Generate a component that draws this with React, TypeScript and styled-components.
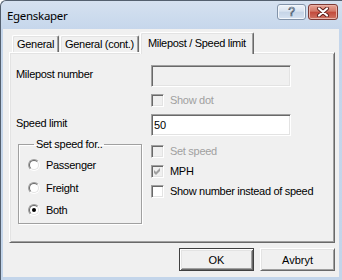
import styled, { createGlobalStyle } from "styled-components";

const GlobalStyle = createGlobalStyle`
  html, body {
    margin: 0;
    padding: 0;
    background: #fff;
  }
  #root {
    width: 342px;
    height: 280px;
  }
`;

// classic win colours
const face = "#f0f0f0";
const light = "#e3e3e3";
const shadow = "#a0a0a0";
const dark = "#696969";

const Window = styled.div`
  width: 342px;
  height: 280px;
  box-sizing: border-box;
  display: flex;
  flex-direction: column;
  background: linear-gradient(#d5e1f0, #c5d6eb 30px, #c3d5ea);
  border-left: 1px solid #54606f;
  border-top: 1px solid #54606f;
  border-top-left-radius: 6px;
  padding: 0 3px 3px 2px;
  font-family: "Liberation Sans", Arial, sans-serif;
  font-size: 11px;
  letter-spacing: -0.3px;
  color: #000;
`;

const TitleBar = styled.div`
  height: 28px;
  box-sizing: border-box;
  display: flex;
  justify-content: space-between;
  align-items: flex-start;
  padding: 3px 1px 0 4px;
`;

const Title = styled.span`
  font-family: "Noto Sans", "Open Sans", sans-serif;
  font-size: 11.5px;
  letter-spacing: -0.3px;
  line-height: 16px;
  margin-top: 4px;
  color: #000;
`;

const Caption = styled.div`
  display: flex;
  gap: 2px;
`;

const CaptionButton = styled.div<{ $close?: boolean }>`
  width: ${(p) => (p.$close ? 30 : 29)}px;
  height: 16px;
  box-sizing: border-box;
  display: flex;
  align-items: center;
  justify-content: center;
  border-radius: 3px;
  border: 1px solid ${(p) => (p.$close ? "#7d3a35" : "#8293a9")};
  background: ${(p) =>
    p.$close
      ? "linear-gradient(#e8a597, #d27868 45%, #c2493b 50%, #cf7464)"
      : "linear-gradient(#eef3f9, #d9e3f0 45%, #c5d4e7 50%, #d6e2f1)"};
  box-shadow: inset 0 0 0 1px ${(p) => (p.$close ? "#eab3a8" : "#f3f7fc")};
`;

const HelpMark = styled.span`
  font-family: "Liberation Sans", Arial, sans-serif;
  font-size: 12px;
  line-height: 12px;
  color: #f4f7fb;
  -webkit-text-stroke: 0.7px #4a5a70;
`;

const Client = styled.div`
  flex: 1;
  display: flex;
  flex-direction: column;
  background: ${face};
  padding: 3px 4px 6px 6px;
`;

const TabStrip = styled.div`
  display: flex;
  align-items: flex-end;
  padding-left: 3px;
  height: 20px;
  position: relative;
  z-index: 1;
`;

const Tab = styled.div<{ $active?: boolean }>`
  box-sizing: border-box;
  height: ${(p) => (p.$active ? 22 : 17)}px;
  padding: ${(p) => (p.$active ? "0 7px 2px" : "0 4px")};
  margin: ${(p) => (p.$active ? "0 -2px -2px 0" : "0 1px 0 0")};
  display: flex;
  align-items: center;
  white-space: nowrap;
  background: ${face};
  border: 1px solid;
  border-color: #fff ${dark} transparent #fff;
  border-bottom: none;
  border-radius: 2px 2px 0 0;
  box-shadow: inset -1px 0 ${shadow}, inset 1px 1px ${light};
`;

const Panel = styled.div`
  flex: 1;
  box-sizing: border-box;
  border: 1px solid;
  border-color: #fff ${dark} ${dark} #fff;
  box-shadow: inset 1px 1px ${light}, inset -1px -1px ${shadow};
  padding: 12px 0 0 6px;
  display: grid;
  grid-template-columns: 135px 140px;
  grid-template-rows: 22px 13px 22px auto;
  row-gap: 7px;
  align-content: start;
`;

const Label = styled.div`
  line-height: 13px;
  padding-top: 3px;
  white-space: nowrap;
`;

const TextBox = styled.input`
  box-sizing: border-box;
  width: 140px;
  height: 22px;
  margin: 0;
  padding: 0 2px;
  font: inherit;
  color: #000;
  outline: none;
  border: 1px solid;
  border-color: ${shadow} #fff #fff ${shadow};
  box-shadow: inset 1px 1px ${dark}, inset -1px -1px ${light};
  background: #fff;
  &:disabled {
    background: ${face};
  }
`;

const Check = styled.label<{ $disabled?: boolean }>`
  display: flex;
  align-items: center;
  gap: 6px;
  height: 13px;
  line-height: 13px;
  white-space: nowrap;
  color: ${(p) => (p.$disabled ? "#a0a0a0" : "#000")};
`;

const Box = styled.span<{ $disabled?: boolean }>`
  width: 13px;
  height: 13px;
  box-sizing: border-box;
  flex: none;
  display: flex;
  align-items: center;
  justify-content: center;
  border: 1px solid;
  border-color: ${shadow} #fff #fff ${shadow};
  box-shadow: inset 1px 1px ${dark}, inset -1px -1px ${light};
  background: ${(p) => (p.$disabled ? face : "#fff")};
`;

const CheckList = styled.div`
  display: flex;
  flex-direction: column;
  gap: 7px;
  padding-top: 2px;
`;

const Group = styled.fieldset`
  margin: -5px 0 0 2px;
  width: 124px;
  height: 86px;
  box-sizing: border-box;
  padding: 3px 0 0 9px;
  border: 1px solid ${shadow};
  box-shadow: 1px 1px 0 #fff, inset 1px 1px 0 #fff;
  display: flex;
  flex-direction: column;
`;

const Legend = styled.legend`
  padding: 0 2px;
  margin-left: 6px;
  line-height: 13px;
`;

const RadioRow = styled.label`
  display: flex;
  align-items: center;
  gap: 6px;
  height: 22.5px;
  white-space: nowrap;
`;

const Radio = styled.span<{ $checked?: boolean }>`
  width: 12px;
  height: 12px;
  box-sizing: border-box;
  flex: none;
  border-radius: 50%;
  border: 1px solid;
  border-color: ${shadow} #fff #fff ${shadow};
  position: relative;
  &::before {
    content: "";
    position: absolute;
    inset: 0;
    border-radius: 50%;
    border: 1px solid;
    border-color: ${dark} ${light} ${light} ${dark};
    background: #fff;
  }
  &::after {
    content: "";
    display: ${(p) => (p.$checked ? "block" : "none")};
    position: absolute;
    left: 3px;
    top: 3px;
    width: 4px;
    height: 4px;
    border-radius: 50%;
    background: #000;
  }
`;

const Footer = styled.div`
  display: flex;
  justify-content: flex-end;
  gap: 6px;
  margin-top: 5px;
`;

const Button = styled.button<{ $default?: boolean }>`
  width: 75px;
  height: 23px;
  margin: 0;
  padding: 0;
  font: inherit;
  color: #000;
  background: ${face};
  border: 1px solid;
  border-color: ${(p) =>
    p.$default ? "#404040" : `#fff ${dark} ${dark} #fff`};
  box-shadow: ${(p) =>
    p.$default
      ? `inset 1px 1px #fff, inset -1px -1px ${dark}, inset 2px 2px ${light}, inset -2px -2px ${shadow}`
      : `inset 1px 1px ${light}, inset -1px -1px ${shadow}`};
`;

function CheckMark({ color }: { color: string }) {
  return (
    <svg width="7" height="7" viewBox="0 0 7 7">
      <path d="M0 2 L2 4 L6 0 L6 3 L2 7 L0 5 Z" fill={color} />
    </svg>
  );
}

function CloseIcon() {
  return (
    <svg width="14" height="10" viewBox="0 0 14 10">
      <path d="M3 1.5 L11 8.5 M11 1.5 L3 8.5" stroke="#5a1e1a" strokeWidth="4" strokeLinecap="round" />
      <path d="M3 1.5 L11 8.5 M11 1.5 L3 8.5" stroke="#fff" strokeWidth="2.2" strokeLinecap="round" />
    </svg>
  );
}

export default function App() {
  return (
    <>
      <GlobalStyle />
      <Window>
        <TitleBar>
          <Title>Egenskaper</Title>
          <Caption>
            <CaptionButton>
              <HelpMark>?</HelpMark>
            </CaptionButton>
            <CaptionButton $close>
              <CloseIcon />
            </CaptionButton>
          </Caption>
        </TitleBar>
        <Client>
          <TabStrip>
            <Tab>General</Tab>
            <Tab>General (cont.)</Tab>
            <Tab $active>Milepost / Speed limit</Tab>
          </TabStrip>
          <Panel>
            <Label>Milepost number</Label>
            <TextBox disabled defaultValue="" />
            <div />
            <Check $disabled>
              <Box $disabled />
              Show dot
            </Check>
            <Label>Speed limit</Label>
            <TextBox defaultValue="50" />
            <Group>
              <Legend>Set speed for..</Legend>
              <RadioRow>
                <Radio />
                Passenger
              </RadioRow>
              <RadioRow>
                <Radio />
                Freight
              </RadioRow>
              <RadioRow>
                <Radio $checked />
                Both
              </RadioRow>
            </Group>
            <CheckList>
              <Check $disabled>
                <Box $disabled />
                Set speed
              </Check>
              <Check>
                <Box $disabled>
                  <CheckMark color="#a0a0a0" />
                </Box>
                MPH
              </Check>
              <Check>
                <Box />
                Show number instead of speed
              </Check>
            </CheckList>
          </Panel>
          <Footer>
            <Button $default>OK</Button>
            <Button>Avbryt</Button>
          </Footer>
        </Client>
      </Window>
    </>
  );
}
